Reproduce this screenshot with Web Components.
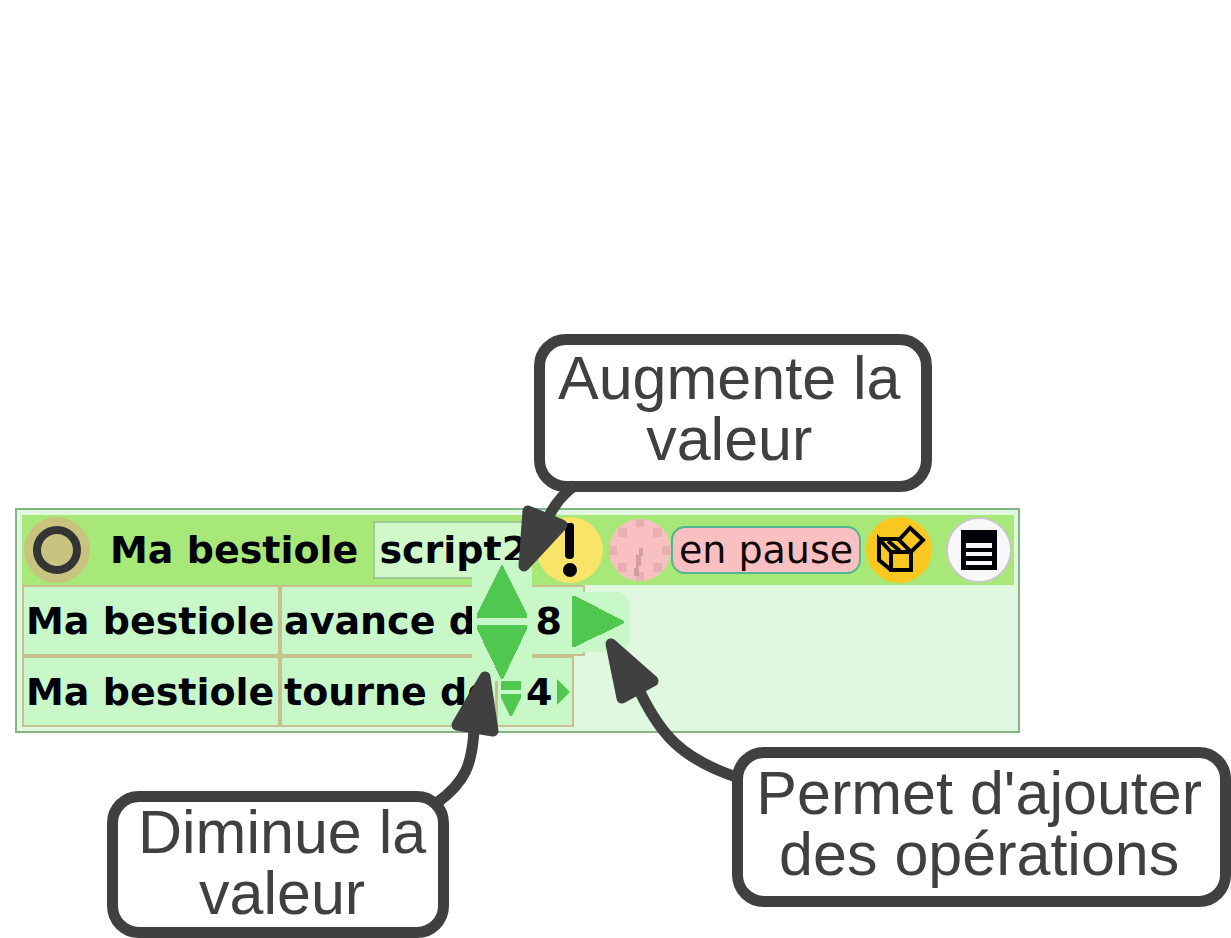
<!DOCTYPE html>
<html lang="fr">
<head>
<meta charset="utf-8">
<title>Ma bestiole – script2</title>
<style>
  html, body { margin: 0; background: #fff; }
</style>
</head>
<body>
<script-lesson></script-lesson>

<script>
  const define = (name, html, setup) => {
    const template = document.createElement('template');
    template.innerHTML = html;
    customElements.define(name, class extends HTMLElement {
      constructor() {
        super();
        this.attachShadow({ mode: 'open' }).append(template.content.cloneNode(true));
        if (setup) setup(this);
      }
    });
  };

  /* Annotation box with a thick rounded outline */
  define('call-out', `
    <style>
      :host {
        display: block; box-sizing: border-box; width: max-content;
        border: 11px solid #404040; border-radius: 32px; background: #fff; color: #404040;
        font: 61px/61px "Liberation Sans", Arial, sans-serif;
        text-align: center; white-space: nowrap;
      }
      p { margin: 0; }
    </style>
    <p><slot></slot></p>`);

  /* Round toolbar button */
  define('round-button', `
    <style>
      :host { display: block; flex: none; }
      button { display: block; border: 0; padding: 0; background: none; }
      ::slotted(svg) { display: block; }
    </style>
    <button><slot></slot></button>`, host => {
      host.shadowRoot.querySelector('button').setAttribute('aria-label', host.getAttribute('label') || '');
    });

  /* Green tile with a tan outline */
  define('code-tile', `
    <style>
      :host {
        display: flex; align-items: center; box-sizing: border-box; height: 71px;
        border: 2px solid #c8c090; background: #c8f8c8; padding: 0 2px;
        white-space: nowrap; position: relative;
      }
    </style>
    <slot></slot>`);

  /* Small up/down arrows, number and expansion arrow */
  define('value-tile', `
    <style>
      :host { display: flex; align-items: center; border-left: 3px solid #c8c090; height: 67px; margin-left: 2px; }
      button { border: 0; padding: 0; background: none; display: block; }
      svg { display: block; fill: #50c850; }
      .number { padding: 0 4px; }
    </style>
    <div>
      <button aria-label="Augmenter"><svg width="24" height="25"><path d="M13 3L23 15V24H3V15Z"/></svg></button>
      <button aria-label="Diminuer"><svg width="24" height="27"><path d="M3 3H23V7L14 25H12L3 7Z"/></svg></button>
    </div>
    <span class="number"><slot></slot></span>
    <button aria-label="Opérations"><svg width="13" height="26"><path d="M0 0L13 13L0 26Z"/></svg></button>`);

  /* Enlarged arrows around a value; they overlap the neighbouring tiles */
  define('big-value', `
    <style>
      :host { display: flex; align-items: center; }
      button { position: absolute; border: 0; padding: 0; display: block; background: #c8f8c8; z-index: 1; }
      svg { display: block; fill: #50c850; }
      .up { right: 51px; bottom: 32px; border-radius: 12px 0 0 0; }
      .down { right: 51px; top: 35px; }
      .more { right: -46px; top: 5px; border-radius: 0 12px 12px 0; }
    </style>
    <button class="up" aria-label="Augmenter la valeur"><svg width="60" height="62" shape-rendering="crispEdges"><path d="M30 4L55 54V58H5V54Z"/></svg></button>
    <slot></slot>
    <button class="down" aria-label="Diminuer la valeur"><svg width="60" height="59" shape-rendering="crispEdges"><path d="M5 3H55V7L31 57H29L5 7Z"/></svg></button>
    <button class="more" aria-label="Ajouter une opération"><svg width="57" height="60" shape-rendering="crispEdges"><path d="M0 4H3L52 29V31L3 55H0Z"/></svg></button>`);

  define('script-panel', `
    <style>
      :host {
        display: block; border: 2px solid #84b484; background: #e0f8e0; padding: 5px 4px 4px 5px;
        font: bold 38px/44px "DejaVu Sans", Verdana, sans-serif; color: #000008;
      }
      header, .left, .right, .row { display: flex; align-items: center; }
      header { height: 70px; justify-content: space-between; background: #a8e878; padding: 0 2px; }
      h1 { font: inherit; margin: 0 15px 0 20px; white-space: nowrap; }
      input {
        box-sizing: border-box; width: 159px; height: 58px; margin: 0; padding: 0 0 0 4px;
        border: 2px solid #a0c898; background: #d0f8c8; font: inherit; color: inherit;
      }
      .pause {
        height: 48px; width: 190px; padding: 0; border: 2px solid #50b890; border-radius: 14px;
        background: #f8c0c0; font: 38px/40px "DejaVu Sans", Verdana, sans-serif; color: #100808;
      }
      .clock { margin-left: 6px; }
      .tiles { margin-left: 5px; }
      .menu { margin-left: 14px; }
      .subject { width: 258px; flex: none; }
      .first { width: 305px; justify-content: space-between; padding-right: 21px; }
    </style>
    <header>
      <div class="left">
        <round-button label="Déplacer">
          <svg width="66" height="66"><circle cx="33" cy="33" r="33" fill="#c8c480"/><circle cx="33" cy="33" r="20" fill="none" stroke="#343434" stroke-width="8"/></svg>
        </round-button>
        <h1>Ma bestiole</h1>
        <input value="script2" aria-label="Nom du script">
      </div>
      <div class="right">
        <round-button label="Exécuter une fois">
          <svg width="66" height="66"><circle cx="33" cy="33" r="33" fill="#f8e468"/><path d="M28 9Q28 6 31 6H34Q37 6 37 9V38Q37 42 33 42Q28 42 28 38Z" fill="#000008"/><circle cx="33" cy="53" r="7" fill="#000008"/></svg>
        </round-button>
        <round-button class="clock" label="Horloge">
          <svg width="62" height="62" shape-rendering="crispEdges"><clipPath id="c"><circle cx="31" cy="31" r="31"/></clipPath>
            <g clip-path="url(#c)"><path d="M0 0H62V62H0Z" fill="#f8c0c0"/>
            <path d="M27 0H35V8H27ZM27 53H35V62H27ZM0 27H8V36H0ZM53 27H62V36H53ZM9 9H18V18H9ZM44 9H53V18H44ZM9 44H18V53H9ZM44 44H53V53H44Z" fill="#e8b0b0"/>
            <path d="M30 29H34V37H32V47H30V57H25V49H27V36H30Z" fill="#d0a0a0"/></g></svg>
        </round-button>
        <button class="pause">en pause</button>
        <round-button class="tiles" label="Tuiles">
          <svg width="66" height="66"><circle cx="33" cy="33" r="33" fill="#f8c820"/>
            <g fill="none" stroke="#000008" stroke-width="4"><path d="M25 35H45V53H25ZM25 53L13 43V22L25 35M13 22H33M22 24L34 34"/><path d="M44 11L57 23L45 35L33 23Z" fill="#f8c820"/></g></svg>
        </round-button>
        <round-button class="menu" label="Menu">
          <svg width="66" height="66"><circle cx="33" cy="33" r="32" fill="#f8f8f8" stroke="#c8c8c8" stroke-width="2"/><path d="M15 13H51V53H15Z" fill="#000008"/><path d="M20 26H46V31H20ZM20 35H46V39H20ZM20 44H46V48H20Z" fill="#f8f8f8"/></svg>
        </round-button>
      </div>
    </header>
    <div class="row">
      <code-tile class="subject">Ma bestiole</code-tile>
      <code-tile class="first">avance de<big-value>8</big-value></code-tile>
    </div>
    <div class="row">
      <code-tile class="subject">Ma bestiole</code-tile>
      <code-tile>tourne de<value-tile>4</value-tile></code-tile>
    </div>`);

  /* Curved arrows linking the annotations to the controls */
  define('link-arrows', `
    <style>
      :host { position: absolute; top: 0; left: 0; z-index: 2; pointer-events: none; }
      svg { display: block; overflow: visible; }
    </style>
    <svg width="1" height="1" aria-hidden="true" stroke="#404040" stroke-linejoin="round">
      <g fill="none" stroke-width="11">
        <path d="M576 485Q559 496 549 516"/>
        <path d="M474 730C472 765 465 782 438 802"/>
        <path d="M640 692C660 733 680 758 736 777"/>
      </g>
      <g fill="#404040" stroke-width="11">
        <path d="M528 511L562 525L524 566Z"/>
        <path d="M485 677L457 725L493 731Z"/>
        <path d="M611 644L653 681L622 698Z"/>
      </g>
    </svg>`);

  define('script-lesson', `
    <style>
      :host { display: block; position: relative; padding-top: 334px; }
      script-panel { margin: 16px 211px 0 15px; }
      .up { margin-left: 534px; padding: 3px 20px 11px 13px; }
      .below { display: flex; justify-content: space-between; align-items: flex-start; margin: 14px 0 0 107px; }
      .down { margin-top: 44px; padding: 0 12px 3px 20px; }
      .more { padding: 5px 18px 11px 13px; }
    </style>
    <call-out class="up">Augmente la<br>valeur</call-out>
    <script-panel></script-panel>
    <div class="below">
      <call-out class="down">Diminue la<br>valeur</call-out>
      <call-out class="more">Permet d'ajouter<br>des opérations</call-out>
    </div>
    <link-arrows></link-arrows>`);
</script>
</body>
</html>
